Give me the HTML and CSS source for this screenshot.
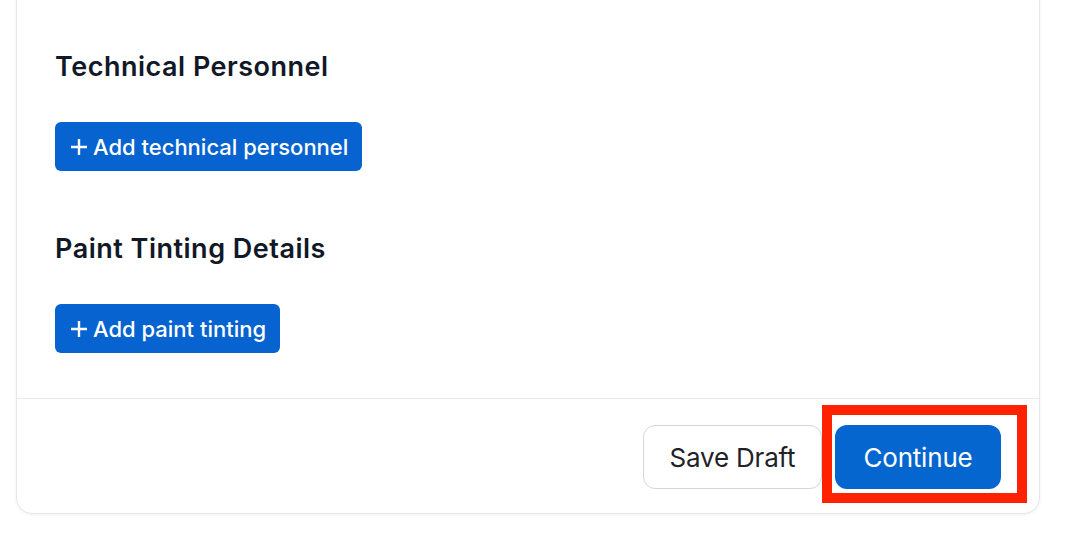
FILE: index.html
```html
<!DOCTYPE html>
<html>
<head>
<meta charset="utf-8">
<link rel="stylesheet" href="styles.css">
</head>
<body>
<div class="card">
  <section class="section">
    <h2 class="section-title">Technical Personnel</h2>
    <button class="add-btn"><svg class="plus" viewBox="0 0 18 18"><path d="M9 1v16M1 9h16"/></svg><span>Add technical personnel</span></button>
  </section>
  <section class="section section-second">
    <h2 class="section-title">Paint Tinting Details</h2>
    <button class="add-btn"><svg class="plus" viewBox="0 0 18 18"><path d="M9 1v16M1 9h16"/></svg><span>Add paint tinting</span></button>
  </section>
  <div class="footer">
    <button class="btn btn-secondary">Save Draft</button>
    <button class="btn btn-primary">Continue</button>
  </div>
</div>
<div class="highlight"></div>
</body>
</html>
```
FILE: styles.css
```css
html, body {
  margin: 0;
  padding: 0;
  background: #ffffff;
}
body {
  font-family: Inter, "Noto Sans", sans-serif;
  width: 1066px;
  height: 534px;
  overflow: hidden;
  position: relative;
}
.card {
  margin: -40px 0 0 16px;
  width: 1022px;
  border: 1px solid #e6e7ec;
  border-radius: 16px;
  background: #fff;
  box-shadow: 0 1px 3px rgba(16, 24, 40, 0.06);
}
.section {
  padding: 0 38px;
  padding-top: 90px;
}
.section-second {
  padding-top: 62px;
  padding-bottom: 45px;
}
.section-title {
  margin: 0 0 39px 0;
  font-size: 27px;
  line-height: 32px;
  font-weight: 600;
  color: #111827;
  letter-spacing: 0.5px;
}
.add-btn {
  display: flex;
  align-items: center;
  gap: 5px;
  height: 49px;
  padding: 0 14px 0 15px;
  border: none;
  border-radius: 6px;
  background: #0763cf;
  color: #fff;
  font-family: inherit;
  font-size: 22px;
  font-weight: 500;
  letter-spacing: 0;
}
.plus {
  width: 18px;
  height: 18px;
  stroke: #fff;
  stroke-width: 2.4;
  fill: none;
}
.footer {
  border-top: 1px solid #e8e9ee;
  display: flex;
  justify-content: flex-end;
  gap: 13px;
  padding: 26px 38px 24px;
}
.btn {
  height: 64px;
  border-radius: 12px;
  font-family: inherit;
  font-size: 26px;
  font-weight: 400;
  letter-spacing: -0.2px;
}
.btn-secondary {
  width: 179px;
  background: #fff;
  border: 1px solid #d4d6dd;
  color: #1f2328;
}
.btn-primary {
  width: 166px;
  background: #0666d0;
  border: none;
  color: #fff;
}
.highlight {
  position: absolute;
  left: 822px;
  top: 405px;
  width: 185px;
  height: 78px;
  border: 10px solid #ff2200;
}
```
